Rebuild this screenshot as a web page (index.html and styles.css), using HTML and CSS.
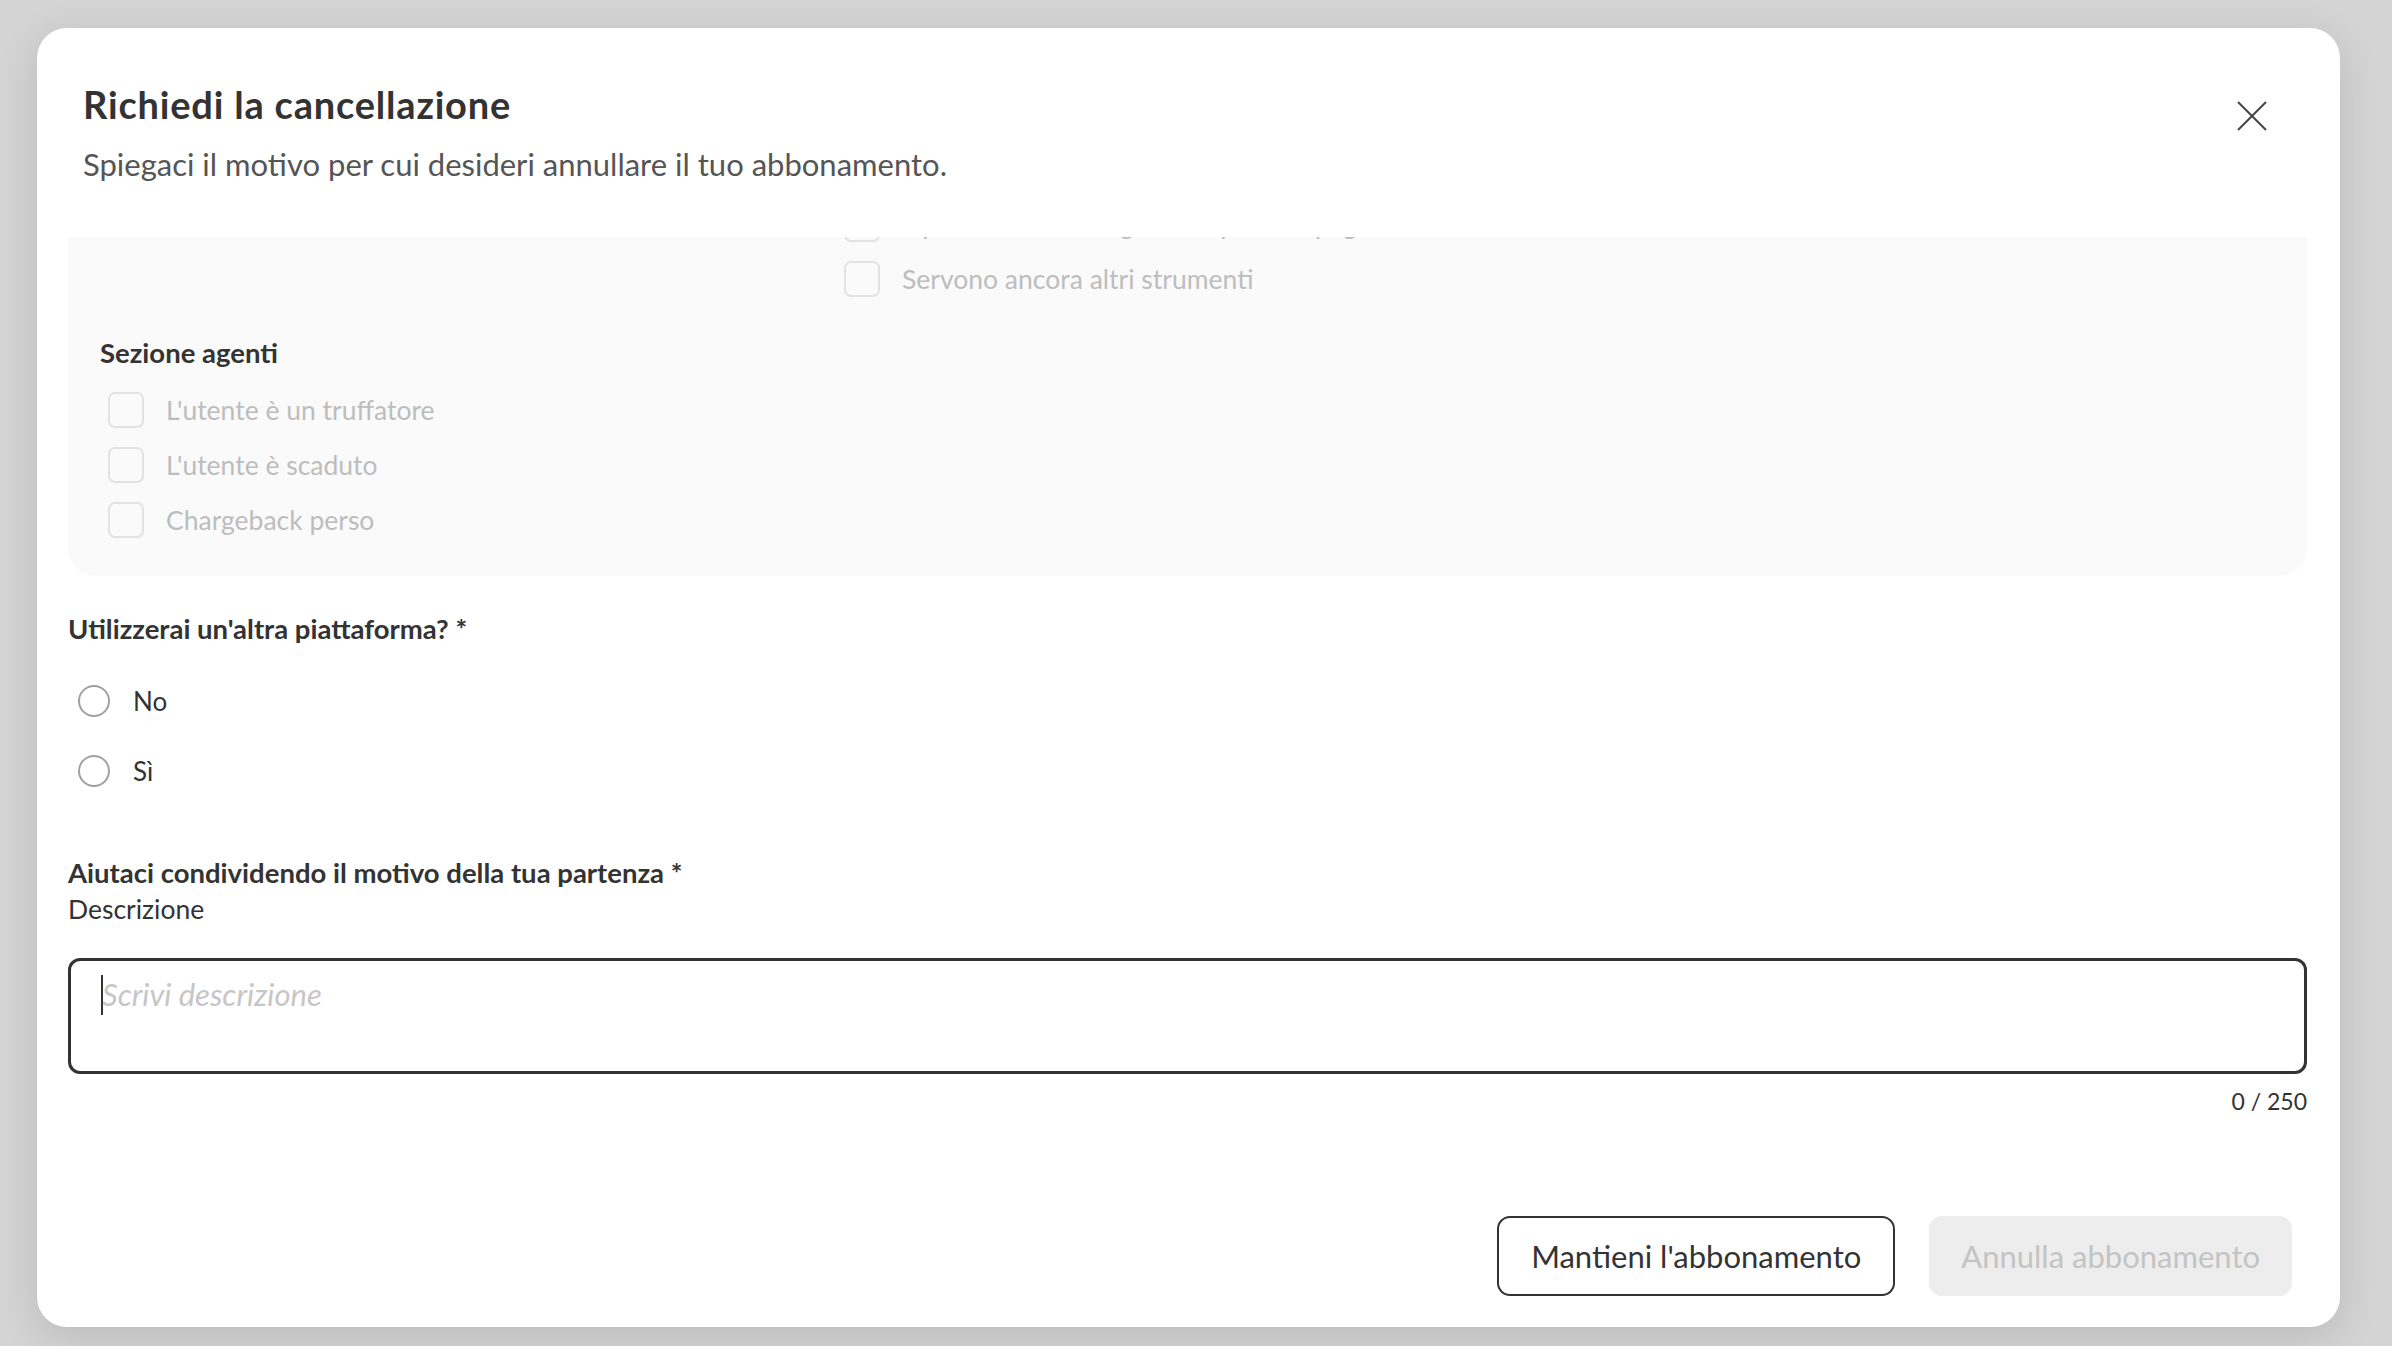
FILE: index.html
```html
<!DOCTYPE html>
<html lang="it">
<head>
    <meta charset="UTF-8">
    <meta name="viewport" content="width=device-width, initial-scale=1.0">
    <title>Richiedi la cancellazione</title>
    <link rel="stylesheet" href="styles.css">
</head>
<body>
    <div class="overlay">
        <div class="modal">
            <header class="modal-header">
                <div class="titles">
                    <h1>Richiedi la cancellazione</h1>
                    <p>Spiegaci il motivo per cui desideri annullare il tuo abbonamento.</p>
                </div>
                <button class="close-btn" aria-label="Chiudi">
                    <svg width="30" height="30" viewBox="0 0 30 30"><path d="M1 1L29 29M29 1L1 29" stroke="#444" stroke-width="2" fill="none"/></svg>
                </button>
            </header>

            <div class="modal-body">
                <div class="reasons">
                    <div class="check-grid">
                        <label class="check col-2"><span class="box"></span>Il prezzo non è adeguato rispetto al pagamento</label>
                        <label class="check col-2"><span class="box"></span>Servono ancora altri strumenti</label>
                    </div>
                    <div class="reason-group">
                        <h3>Sezione agenti</h3>
                        <div class="check-list">
                            <label class="check"><span class="box"></span>L'utente è un truffatore</label>
                            <label class="check"><span class="box"></span>L'utente è scaduto</label>
                            <label class="check"><span class="box"></span>Chargeback perso</label>
                        </div>
                    </div>
                </div>

                <div class="field first">
                    <div class="field-label">Utilizzerai un'altra piattaforma? *</div>
                    <div class="radio-list">
                        <label class="radio"><span class="dot"></span>No</label>
                        <label class="radio"><span class="dot"></span>Sì</label>
                    </div>
                </div>

                <div class="field second">
                    <div class="field-label">Aiutaci condividendo il motivo della tua partenza *</div>
                    <div class="field-sub">Descrizione</div>
                    <div class="textarea-wrap">
                        <textarea placeholder="Scrivi descrizione"></textarea>
                        <span class="caret"></span>
                    </div>
                    <div class="counter">0 / 250</div>
                </div>
            </div>

            <footer class="modal-footer">
                <button class="btn btn-outline">Mantieni l'abbonamento</button>
                <button class="btn btn-disabled" disabled>Annulla abbonamento</button>
            </footer>
        </div>
    </div>
</body>
</html>
```

FILE: styles.css
```css
html, body {
    margin: 0;
    padding: 0;
    height: 100%;
    font-family: "Lato", "Noto Sans", sans-serif;
    background: #d4d4d4;
    color: #333;
}
.overlay {
    height: 100%;
    box-sizing: border-box;
    padding: 28px 52px 19px 37px;
    display: flex;
}
.modal {
    flex: 1;
    display: flex;
    flex-direction: column;
    background: #fff;
    border-radius: 30px;
    box-shadow: 0 10px 40px rgba(0, 0, 0, 0.12);
    overflow: hidden;
}
.modal-header {
    display: flex;
    justify-content: space-between;
    align-items: flex-start;
    padding: 53px 73px 54px 46px;
}
.modal-header h1 {
    margin: 0;
    font-size: 38px;
    line-height: 46px;
    letter-spacing: 0.8px;
    font-weight: 700;
    color: #333;
}
.modal-header p {
    margin: 18px 0 0;
    font-size: 31px;
    line-height: 38px;
    color: #555;
}
.close-btn {
    margin-top: 20px;
    padding: 0;
    border: none;
    background: none;
    width: 30px;
    height: 30px;
    cursor: pointer;
}
.close-btn svg {
    display: block;
}
.modal-body {
    flex: 1;
    min-height: 0;
    overflow: hidden;
    padding: 0 33px 0 31px;
}
.reasons {
    margin-top: -31px;
    padding: 0 32px 38px;
    background: #fafafa;
    border-radius: 28px;
}
.check-grid {
    display: grid;
    grid-template-columns: repeat(3, 1fr);
    column-gap: 24px;
    row-gap: 19px;
}
.col-2 {
    grid-column: 2;
}
.check {
    display: flex;
    align-items: center;
    gap: 22px;
    margin-left: 8px;
    font-size: 26.5px;
    line-height: 36px;
    color: #bdbdbd;
    white-space: nowrap;
}
.check.col-2 {
    margin-left: 11px;
}
.box {
    width: 36px;
    height: 36px;
    box-sizing: border-box;
    border: 2px solid #e2e2e2;
    border-radius: 7px;
    flex-shrink: 0;
}
.reason-group h3 {
    margin: 38px 0 0;
    font-size: 27.5px;
    line-height: 36px;
    font-weight: 700;
    color: #333;
}
.check-list {
    margin-top: 21px;
    display: flex;
    flex-direction: column;
    gap: 19px;
}
.field.first {
    margin-top: 35px;
}
.field.second {
    margin-top: 66px;
}
.field-label {
    font-size: 27.5px;
    line-height: 36px;
    font-weight: 700;
}
.field-sub {
    font-size: 26.5px;
    line-height: 36px;
}
.radio-list {
    margin-top: 36px;
    display: flex;
    flex-direction: column;
    gap: 34px;
}
.radio {
    display: flex;
    align-items: center;
    gap: 23px;
    margin-left: 10px;
    font-size: 26px;
    line-height: 36px;
}
.dot {
    width: 32px;
    height: 32px;
    box-sizing: border-box;
    border: 2px solid #a0a0a0;
    border-radius: 50%;
}
.textarea-wrap {
    position: relative;
    margin-top: 31px;
}
textarea {
    display: block;
    width: 100%;
    height: 116px;
    box-sizing: border-box;
    padding: 15px 31px;
    border: 3px solid #333;
    border-radius: 12px;
    font-family: inherit;
    font-size: 31px;
    line-height: 36px;
    color: #333;
    resize: none;
    outline: none;
}
textarea::placeholder {
    color: #c6c6c6;
    font-style: italic;
}
.caret {
    position: absolute;
    left: 33px;
    top: 17px;
    width: 2px;
    height: 40px;
    background: #333;
}
.counter {
    margin-top: 12px;
    text-align: right;
    font-size: 23px;
    line-height: 30px;
}
.modal-footer {
    display: flex;
    justify-content: flex-end;
    gap: 34px;
    padding: 0 48px 31px;
}
.btn {
    height: 80px;
    padding: 0 32px;
    font-family: inherit;
    font-size: 31px;
    border-radius: 13px;
    cursor: pointer;
}
.btn-outline {
    background: #fff;
    color: #333;
    border: 2px solid #333;
}
.btn-disabled {
    background: #ededed;
    color: #c4c4c4;
    border: none;
    cursor: default;
}
```
